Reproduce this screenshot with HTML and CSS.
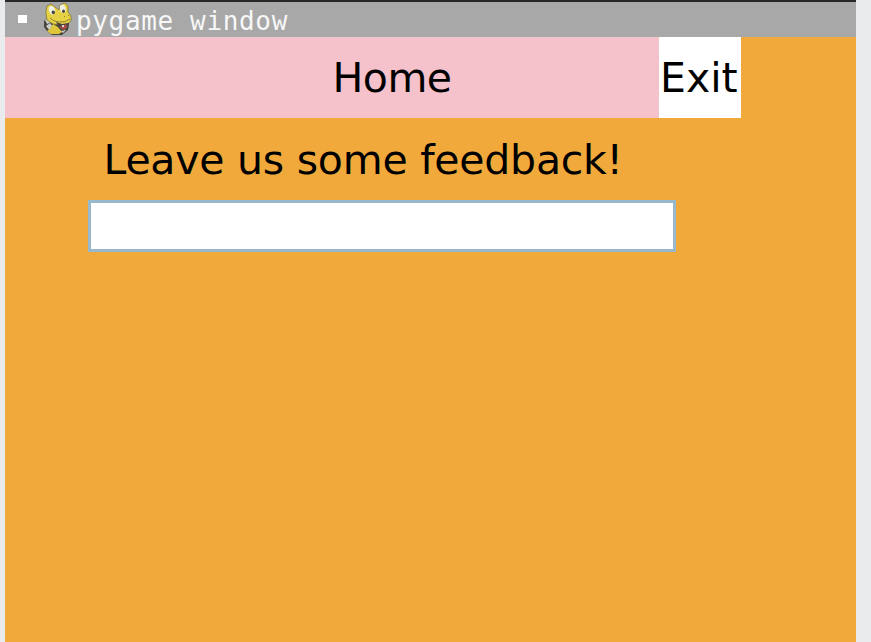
FILE: index.html
```
<!DOCTYPE html>
<html lang="en">
<head>
<meta charset="utf-8">
<title>pygame window</title>
<link rel="stylesheet" href="styles.css">
</head>
<body>
<main class="window">
  <header class="titlebar">
    <span class="menu-mark"></span>
    <svg class="snake" viewBox="0 0 28 32" aria-hidden="true">
      <path d="M5 13 0 18l0 6 3 4 5 4 10 0 6-5 1-7-8-3z" fill="#45443d"/>
      <path d="M1 17l3-2 3 4-4 2zM2 23l4-3 3 4-4 3zM17 28l3-2 2 1-3 3z" fill="#cbcbc5"/>
      <path d="M2 8 3 3 7 1l4 3 4 3 1-5 5-2 3 3 0 6 3 4 0 5-4 3-6 1-8-1-6-4-1-6z" fill="#e6d145" stroke="#79702e" stroke-width=".7"/>
      <path d="M3 28l3-2 3-5 5 3 4 5-3 2-8 0z" fill="#dec53a"/>
      <path d="M12 19l6 2 7-1-1 5-5 3-4-3z" fill="#4c443e"/>
      <path d="M15 24l4-1 3-2 1 3-3 3z" fill="#ae4b47"/>
      <path d="M18 22l2 0 0 2-2 0z" fill="#dbd9d2"/>
      <ellipse cx="8" cy="7.3" rx="3" ry="4.4" fill="#f1f0e7" transform="rotate(-18 8 7.3)"/>
      <ellipse cx="18.8" cy="5.8" rx="2.8" ry="4.3" fill="#f1f0e7" transform="rotate(-14 18.8 5.8)"/>
      <ellipse cx="9.3" cy="9.4" rx="1.7" ry="1.8" fill="#4a473b"/>
      <ellipse cx="19.5" cy="8.3" rx="1.5" ry="1.7" fill="#4a473b"/>
      <path d="M6 15q4 4 9 4 6 1 11-3M20 13l1 1M24 12l1 1" fill="none" stroke="#877a2c" stroke-width=".9"/>
    </svg>
    <span class="title">pygame window</span>
  </header>
  <nav class="nav">
    <div class="home">Home</div>
    <div class="exit">Exit</div>
  </nav>
  <section class="feedback">
    <label class="prompt" for="message">Leave us some feedback!</label>
    <input class="message" id="message" type="text">
  </section>
</main>
</body>
</html>
```
FILE: styles.css
```
* { box-sizing: border-box; }
body {
  margin: 0;
  height: 642px;
  padding: 0 15px 0 5px;
  overflow: hidden;
  background: #eaebec;
  font-family: "DejaVu Sans", sans-serif;
  color: #000;
}
.window {
  height: 642px;
  background: #f1a93b;
}
.titlebar {
  display: flex;
  height: 36.5px;
  padding-left: 13px;
  border-top: 2px solid #282828;
  background: #a8a8a8;
}
.menu-mark {
  width: 9px;
  height: 8px;
  margin-top: 13px;
  background: #fff;
}
.snake {
  width: 28px;
  height: 32px;
  margin: 1px 0 0 17px;
}
.title {
  margin-left: 4px;
  padding-top: 1px;
  font: 26px/36px "DejaVu Sans Mono", monospace;
  letter-spacing: 0.65px;
  white-space: pre;
  color: #f7f7f7;
}
.nav {
  display: flex;
  height: 81.5px;
  font-size: 41px;
  line-height: 83px;
}
.home {
  width: 654.4px;
  padding-left: 327.5px;
  background: #f5c1cb;
  letter-spacing: -0.5px;
}
.exit {
  width: 82px;
  padding-left: 0.6px;
  background: #fff;
}
.feedback {
  display: flex;
  flex-direction: column;
  padding-left: 83px;
}
.prompt {
  height: 82px;
  padding-left: 15.5px;
  font-size: 41px;
  line-height: 84px;
  letter-spacing: -0.24px;
  white-space: nowrap;
}
.message {
  width: 588px;
  height: 52px;
  padding: 4px 10px;
  border: 3px solid #98b9cc;
  border-radius: 0;
  outline: none;
  background: #fff;
  font: 32px "DejaVu Sans", sans-serif;
}
```
